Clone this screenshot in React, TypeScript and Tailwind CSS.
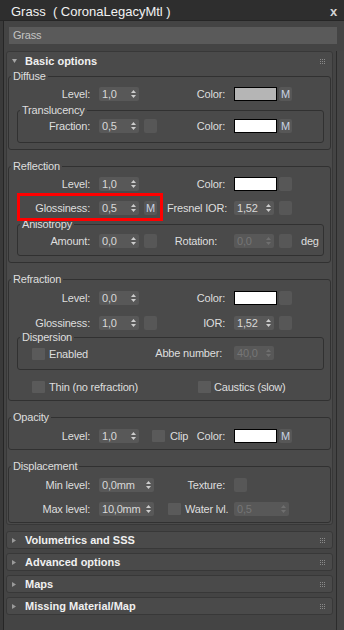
import type { ReactNode } from "react";

function Arrows({ dim }: { dim?: boolean }) {
  return (
    <svg width="5" height="8" viewBox="0 0 5 8" className={dim ? "fill-[#6f6f6f]" : "fill-[#cdcdcd]"}>
      <path d="M2.5 0L5 3H0Z" />
      <path d="M0 5H5L2.5 8Z" />
    </svg>
  );
}

function Spin({ value, wide, dim, className = "" }: { value: string; wide?: boolean; dim?: boolean; className?: string }) {
  return (
    <div
      className={`flex h-[14px] shrink-0 items-center justify-between rounded-[2px] bg-[#585858] pl-[3px] pr-[3px] ${
        wide ? "w-[55px]" : "w-[40px]"
      } ${className}`}
    >
      <span className={dim ? "text-[#767676]" : "text-[#d8d8d8]"}>{value}</span>
      <Arrows dim={dim} />
    </div>
  );
}

function Btn({ m, className = "" }: { m?: boolean; className?: string }) {
  return (
    <div
      className={`flex h-[14px] w-[13px] shrink-0 items-center justify-center rounded-[2px] bg-[#575757] text-[#c9d2e2] ${className}`}
    >
      {m ? "M" : null}
    </div>
  );
}

function Check({ className = "" }: { className?: string }) {
  return <div className={`h-[12px] w-[13px] shrink-0 rounded-[1px] bg-[#5a5a5a] ${className}`} />;
}

function Swatch({ color, className = "" }: { color: string; className?: string }) {
  return <div className={`h-[14px] w-[43px] shrink-0 border border-black ${color} ${className}`} />;
}

function Label({ w, children }: { w: string; children: ReactNode }) {
  return <div className={`flex shrink-0 justify-end whitespace-nowrap ${w}`}>{children}</div>;
}

function Group({ title, className = "", children }: { title: string; className?: string; children: ReactNode }) {
  return (
    <fieldset className={`rounded-[3px] border border-[#313131] ${className}`}>
      <legend className="ml-[2px] px-[2px] leading-[13px]">{title}</legend>
      {children}
    </fieldset>
  );
}

function Dots() {
  return (
    <svg width="5" height="5" viewBox="0 0 5 5" className="fill-[#8a8a8a]">
      {[0, 2, 4].map((y) =>
        [0, 2, 4].map((x) => <rect key={`${x}-${y}`} x={x} y={y} width="1" height="1" />)
      )}
    </svg>
  );
}

function Rollout({ title, open, children }: { title: string; open?: boolean; children?: ReactNode }) {
  return (
    <div className="rounded-[3px] border border-[#383838] bg-[#4a4a4a]">
      <div className={`flex items-center ${open ? "h-[18px]" : "h-[16px]"}`}>
        {open ? (
          <svg width="5" height="4" viewBox="0 0 5 4" className="ml-[5px] fill-[#a6a6a6]">
            <path d="M0 0H5L2.5 4Z" />
          </svg>
        ) : (
          <svg width="4" height="5" viewBox="0 0 4 5" className="ml-[5px] fill-[#9a9a9a]">
            <path d="M0 0L4 2.5L0 5Z" />
          </svg>
        )}
        <span className={`${open ? "ml-[8px]" : "ml-[9px]"} font-bold tracking-normal text-[#f0f0f0]`}>{title}</span>
        <div className="ml-auto mr-[7px] flex">
          <Dots />
        </div>
      </div>
      {children}
    </div>
  );
}

const row = "flex h-[14px] items-center";

export default function App() {
  return (
    <div className="flex h-[630px] w-[344px] flex-col overflow-hidden bg-[#444444] font-['Liberation_Sans',Arial,sans-serif] text-[11px] leading-[13px] tracking-[-0.2px] text-[#dedede]">
      {/* title bar */}
      <div className="flex h-[21px] shrink-0 items-center border-b border-[#262626] bg-[#2e2e2e] pt-[2px]">
        <span className="ml-[11px] whitespace-pre text-[13px] tracking-normal text-[#f2f2f2]">Grass  ( CoronaLegacyMtl )</span>
        <span className="ml-auto mr-[7px] text-[13px] font-bold text-[#d4d4d4]">x</span>
      </div>

      <div className="flex flex-1">
        <div className="w-[4px] border-r border-[#262626] bg-[#3a3a3a]" />
        <div className="flex flex-1 flex-col">
          {/* name field */}
          <div className="ml-[5px] mr-[7px] mt-[6px] flex h-[17px] items-center bg-[#5a5a5a] pl-[4px] text-[#c4c4c4]">
            Grass
          </div>

          <div className="mt-[7px] flex flex-1">
            <div className="ml-[2px] flex w-[327px] flex-col">
              <Rollout title="Basic options" open>
                <div className="px-[1px] pb-[1px]">
                  {/* Diffuse */}
                  <Group title="Diffuse" className="pb-[6px]">
                    <div className={`mt-[4px] ${row}`}>
                      <Label w="w-[81px]">Level:</Label>
                      <Spin value="1,0" className="ml-[9px]" />
                      <Label w="w-[86px]">Color:</Label>
                      <Swatch color="bg-[#b5b5b5]" className="ml-[9px]" />
                      <Btn m className="ml-[2px]" />
                    </div>
                    <Group title="Translucency" className="ml-[8px] mr-[6px] mt-[3px] pb-[9px]">
                      <div className={`mt-[2px] ${row}`}>
                        <Label w="w-[72px]">Fraction:</Label>
                        <Spin value="0,5" className="ml-[9px]" />
                        <Btn className="ml-[5px]" />
                        <Label w="w-[68px]">Color:</Label>
                        <Swatch color="bg-white" className="ml-[9px]" />
                        <Btn m className="ml-[2px]" />
                      </div>
                    </Group>
                  </Group>

                  {/* Reflection */}
                  <Group title="Reflection" className="mt-[10px] pb-[6px]">
                    <div className={`mt-[4px] ${row}`}>
                      <Label w="w-[81px]">Level:</Label>
                      <Spin value="1,0" className="ml-[9px]" />
                      <Label w="w-[86px]">Color:</Label>
                      <Swatch color="bg-white" className="ml-[9px]" />
                      <Btn className="ml-[2px]" />
                    </div>
                    <div className={`relative mt-[10px] ${row}`}>
                      <Label w="w-[81px]">Glossiness:</Label>
                      <Spin value="0,5" className="ml-[9px]" />
                      <Btn m className="ml-[5px]" />
                      <Label w="w-[70px]">Fresnel IOR:</Label>
                      <Spin value="1,52" className="ml-[7px]" />
                      <Btn className="ml-[5px]" />
                      <div className="pointer-events-none absolute left-[8px] top-[-8px] z-10 h-[28px] w-[146px] border-[3px] border-[#ff0000]" />
                    </div>
                    <Group title="Anisotropy" className="ml-[8px] mr-[6px] mt-[3px] pb-[7px]">
                      <div className={`mt-[3px] ${row}`}>
                        <Label w="w-[72px]">Amount:</Label>
                        <Spin value="0,0" className="ml-[9px]" />
                        <Btn className="ml-[5px]" />
                        <Label w="w-[60px]">Rotation:</Label>
                        <Spin value="0,0" dim className="ml-[17px]" />
                        <Btn className="ml-[5px]" />
                        <span className="ml-[9px]">deg</span>
                      </div>
                    </Group>
                  </Group>

                  {/* Refraction */}
                  <Group title="Refraction" className="mt-[10px] pb-[6px]">
                    <div className={`mt-[5px] ${row}`}>
                      <Label w="w-[81px]">Level:</Label>
                      <Spin value="0,0" className="ml-[9px]" />
                      <Label w="w-[86px]">Color:</Label>
                      <Swatch color="bg-white" className="ml-[9px]" />
                      <Btn className="ml-[2px]" />
                    </div>
                    <div className={`mt-[11px] ${row}`}>
                      <Label w="w-[81px]">Glossiness:</Label>
                      <Spin value="1,0" className="ml-[9px]" />
                      <Btn className="ml-[5px]" />
                      <Label w="w-[68px]">IOR:</Label>
                      <Spin value="1,52" className="ml-[9px]" />
                      <Btn className="ml-[5px]" />
                    </div>
                    <Group title="Dispersion" className="ml-[8px] mr-[6px] mt-[1px] pb-[9px]">
                      <div className={`mt-[2px] ${row}`}>
                        <div className="mt-[2px] flex w-[139px] shrink-0 items-center">
                          <Check className="ml-[14px]" />
                          <span className="ml-[4px]">Enabled</span>
                        </div>
                        <Label w="w-[65px]">Abbe number:</Label>
                        <Spin value="40,0" dim className="ml-[12px]" />
                      </div>
                    </Group>
                    <div className={`mt-[10px] ${row}`}>
                      <div className="flex w-[189px] shrink-0 items-center">
                        <Check className="ml-[23px]" />
                        <span className="ml-[4px]">Thin (no refraction)</span>
                      </div>
                      <Check />
                      <span className="ml-[3px]">Caustics (slow)</span>
                    </div>
                  </Group>

                  {/* Opacity */}
                  <Group title="Opacity" className="mt-[10px] pb-[6px]">
                    <div className={`mt-[5px] ${row}`}>
                      <Label w="w-[81px]">Level:</Label>
                      <Spin value="1,0" className="ml-[9px]" />
                      <div className="flex w-[86px] shrink-0 items-center">
                        <Check className="ml-[13px]" />
                        <span className="ml-[5px]">Clip</span>
                        <span className="ml-auto">Color:</span>
                      </div>
                      <Swatch color="bg-white" className="ml-[9px]" />
                      <Btn m className="ml-[2px]" />
                    </div>
                  </Group>

                  {/* Displacement */}
                  <Group title="Displacement" className="mt-[10px] pb-[6px]">
                    <div className={`mt-[5px] ${row}`}>
                      <Label w="w-[81px]">Min level:</Label>
                      <Spin value="0,0mm" wide className="ml-[9px]" />
                      <Label w="w-[71px]">Texture:</Label>
                      <Btn className="ml-[9px]" />
                    </div>
                    <div className={`mt-[10px] ${row}`}>
                      <Label w="w-[81px]">Max level:</Label>
                      <Spin value="10,0mm" wide className="ml-[9px]" />
                      <div className="flex w-[80px] shrink-0 items-center">
                        <Check className="ml-[14px]" />
                        <span className="ml-[4px] whitespace-nowrap">Water lvl.</span>
                      </div>
                      <Spin value="0,5" wide dim />
                    </div>
                  </Group>
                </div>
              </Rollout>

              <div className="mt-[6px] flex flex-col gap-[4px]">
                <Rollout title="Volumetrics and SSS" />
                <Rollout title="Advanced options" />
                <Rollout title="Maps" />
                <Rollout title="Missing Material/Map" />
              </div>
            </div>
            <div className="ml-[3px] flex-1 border-l border-[#2c2c2c] bg-[#454545]" />
          </div>
        </div>
      </div>
    </div>
  );
}
